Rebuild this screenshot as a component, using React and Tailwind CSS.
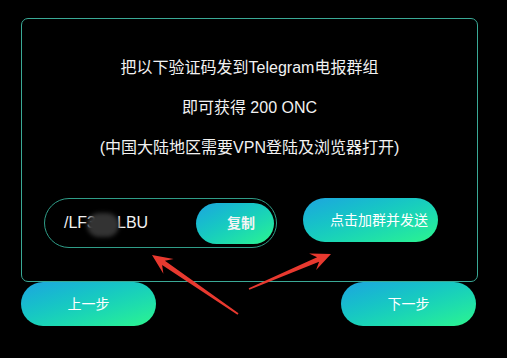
export default function App() {
  const font = { fontFamily: '"Liberation Sans", "Noto Sans CJK SC", sans-serif' };
  const grad = 'bg-gradient-to-br from-[#1fa4df] to-[#2df58c]';

  return (
    <div className="relative h-[358px] w-[507px] overflow-hidden bg-black text-white" style={font}>
      <div className="pl-[21px] pt-[18px]">
        <div className="h-[264px] w-[457px] rounded-[7px] border border-[#3aa996]">
          <div className="flex flex-col items-center pt-[29px] text-[16px] leading-[40px] text-[#f2f2f2]">
            <p>把以下验证码发到Telegram电报群组</p>
            <p>即可获得 200 ONC</p>
            <p>(中国大陆地区需要VPN登陆及浏览器打开)</p>
          </div>

          <div className="mt-[30px] flex items-start pl-[22px]">
            <div className="flex h-[50px] w-[233px] items-center justify-between rounded-full border border-[#2f9d88] pl-[19px] pr-[2px]">
              <span className="flex items-center text-[16px] text-[#f2f2f2]">
                /LF3
                <span className="-ml-[9px] mr-[-2px] mt-[4px] inline-block h-[24px] w-[32px] rounded-full bg-[#333333] blur-[2px]" />
                LBU
              </span>
              <button className={`h-[41px] w-[78px] rounded-full ${grad} pl-[31px] text-left text-[14px] font-semibold text-[#f4f4f4]`}>
                复制
              </button>
            </div>
            <button className={`ml-[26px] h-[44px] w-[135px] rounded-full ${grad} pl-[27px] text-left text-[14px] text-white`}>
              点击加群并发送
            </button>
          </div>
        </div>
      </div>

      <div className="flex w-[476px] justify-between pl-[21px]">
        <button className={`h-[44px] w-[135px] rounded-full ${grad} text-[14px] text-white`}>上一步</button>
        <button className={`h-[44px] w-[135px] rounded-full ${grad} text-[14px] text-white`}>下一步</button>
      </div>

      <svg className="pointer-events-none absolute left-0 top-0" width="507" height="358" viewBox="0 0 507 358">
        <polygon
          fill="#e8392f"
          points="152,255 173.6,258.9 164.9,260.8 238.5,313.3 237.5,314.7 162.1,265 163.4,273.7"
        />
        <polygon
          fill="#e8392f"
          points="331,254 309.1,253.5 317.1,257.2 248.7,288.3 249.3,289.7 319.1,261.8 316.1,270.1"
        />
      </svg>
    </div>
  );
}
